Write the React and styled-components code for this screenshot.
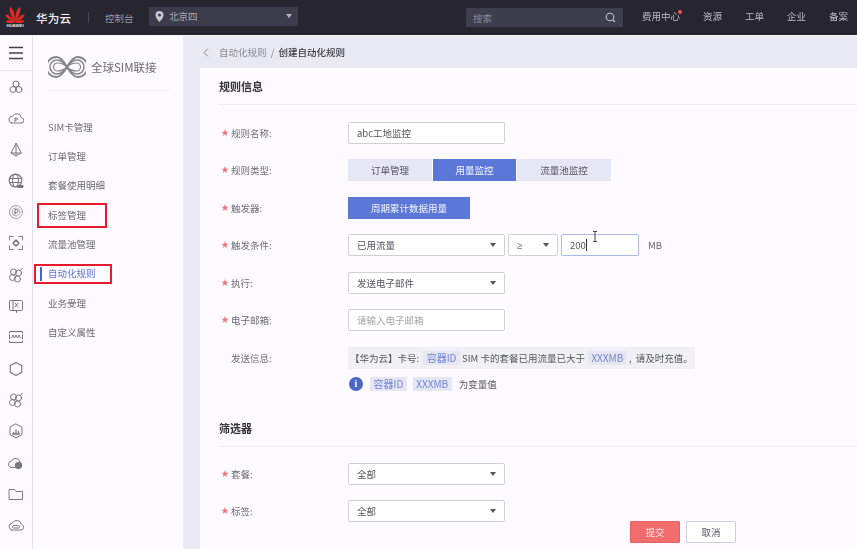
import React from 'react';
import styled, { createGlobalStyle } from 'styled-components';

const Global = createGlobalStyle`
  html, body { margin: 0; padding: 0; height: 100%; overflow: hidden; }
  body { font-family: "Noto Sans CJK SC", "Liberation Sans", sans-serif; font-size: 9.5px; color: #555; background: #e9e9f2; }
  #root { height: 100%; }
  * { box-sizing: border-box; }
`;

const Page = styled.div`width: 857px; height: 549px; overflow: hidden; display: flex; flex-direction: column; filter: blur(0.3px);`;

const Header = styled.header`
  height: 36px; flex: none; background: #272530; border-bottom: 1px solid #f4f4f8;
  display: flex; align-items: center; color: #c9c9d0;
`;
const LogoBox = styled.div`width: 36px; padding-left: 4px; flex: none; display: flex; align-items: center;`;
const Brand = styled.div`font-size: 11.5px; font-weight: 500; color: #f0f0f2; width: 52px; letter-spacing: .2px;`;
const HeaderRule = styled.div`width: 1px; height: 11px; background: #4a4955; margin-right: 16px;`;
const Console = styled.div`color: #9a99a3; width: 44px; font-size: 9.5px;`;
const Region = styled.div`
  width: 149px; height: 19px; background: #3c3c4c; border-radius: 1px; display: flex; align-items: center;
  padding: 0 6px; color: #a7a7b0; gap: 5px; margin-bottom: 2px; margin-top: -1px;
`;
const Caret = styled.span`
  width: 0; height: 0; border-left: 3px solid transparent; border-right: 3px solid transparent;
  border-top: 4px solid ${p => p.$c || '#555'}; margin-left: auto; flex: none;
`;
const Search = styled.div`
  margin-left: 168px; width: 157px; height: 19px; background: #3f3e4e; border-radius: 1px; display: flex;
  align-items: center; justify-content: space-between; padding: 0 7px; color: #8a8a94;
`;
const Nav = styled.nav`margin-left: 19px; display: flex; gap: 23px; color: #bdbdc4; margin-top: -3px;`;
const NavItem = styled.span`position: relative; white-space: nowrap;`;
const Dot = styled.i`position: absolute; right: -2px; top: 1px; width: 4px; height: 4px; border-radius: 50%; background: #f0525a;`;

const Body = styled.div`flex: 1; display: flex; min-height: 0;`;

const Rail = styled.aside`width: 33px; flex: none; background: #fdfbff; border-right: 1px solid #e2e2ea; display: flex; flex-direction: column; align-items: center;`;
const Burger = styled.div`
  width: 100%; height: 35px; flex: none; border-bottom: 1px solid #e8e8ee; display: flex; align-items: center; justify-content: center;
`;
const RailList = styled.div`display: flex; flex-direction: column; align-items: center; gap: 15.3px; padding-top: 8px;`;

const Side = styled.aside`width: 150px; flex: none; background: #fdfbff; padding: 0 15px;`;
const SideBrand = styled.div`
  height: 55px; margin-top: 0; display: flex; align-items: center; gap: 5px; border-bottom: 1px solid #ebebf1; color: #6b6b73; font-size: 11.5px; margin-right: -1px;
  padding-top: 8px;
`;
const Menu = styled.div`display: flex; flex-direction: column; padding-top: 21.5px; margin-left: 0;`;
const MenuItem = styled.div`
  position: relative; height: 29.35px; line-height: 29px; color: ${p => p.$active ? '#5d76d3' : '#6a6a72'}; white-space: nowrap;
`;
const ActiveBar = styled.i`position: absolute; left: -8px; top: 8px; width: 1.5px; height: 14px; background: #4a63c9;`;
const RedBox = styled.i`
  position: absolute; left: ${p => p.$l}px; width: ${p => p.$w}px; top: ${p => p.$t}px; height: ${p => p.$h}px;
  border: 2px solid #e8192c; pointer-events: none;
`;

const Main = styled.main`flex: 1; min-width: 0; padding-left: 17px;`;
const Crumb = styled.div`height: 32px; display: flex; align-items: center; color: #8b8b94; margin-left: 0; padding-left: 3px;`;
const CrumbBack = styled.span`width: 16px; display: flex;`;
const CrumbNow = styled.b`color: #3a3a42; font-weight: 500; margin-left: 4px;`;
const Card = styled.section`background: #fdfbff; padding-left: 18px; height: 481px; overflow: hidden; display: flex; flex-direction: column;`;
const SectionTitle = styled.h2`
  margin: 0; height: 37px; line-height: 37px; font-size: 11px; font-weight: 700; color: #33333a; border-bottom: 1px solid #ededf3; padding-left: 1px; flex: none;
`;
const Rows = styled.div`padding-top: 9px; display: flex; flex-direction: column;`;
const Row = styled.div`height: 37.5px; flex: none; display: flex; align-items: center;`;
const Label = styled.div`width: 130px; flex: none; color: #6d6d75; padding-left: 13px; position: relative;`;
const Star = styled.span`position: absolute; left: 3px; top: 0; color: #e8767c; font-size: 8px;`;
const Control = styled.div`display: flex; align-items: center; gap: ${p => p.$gap || 0}px;`;
const Box = styled.div`
  width: ${p => p.$w || 157}px; height: 22px; background: #fff; border: 1px solid ${p => p.$focus ? '#a9b9ec' : '#d0d0d8'}; border-radius: 2px;
  display: flex; align-items: center; padding: 0 8px; color: ${p => p.$muted ? '#a5a5ad' : '#55555d'}; position: relative; white-space: nowrap;
`;
const Geq = styled.span`font-family: "Liberation Sans", sans-serif; font-size: 10px; color: #77777f;`;
const TextCaret = styled.i`width: 1px; height: 12px; background: #333; margin-left: 0;`;
const Ibeam = styled.svg`position: absolute; left: 30px; top: -4px;`;
const Unit = styled.span`margin-left: 6px; color: #666;`;
const Seg = styled.div`
  width: ${p => p.$w}px; height: 22px; display: flex; align-items: center; justify-content: center;
  background: ${p => p.$on ? '#5b78d8' : '#e6e7f6'}; color: ${p => p.$on ? '#f4f5fd' : '#55555d'};
`;
const Message = styled.div`
  width: 347px; height: 22px; background: #f0f0f5; display: flex; align-items: center; padding-left: 2px; white-space: pre; color: #55555d; border-radius: 1px;
`;
const Tag = styled.span`
  display: inline-flex; align-items: center; height: 14px; padding: 0 3.5px; background: #e5e6f1; color: #7387d6; margin: ${p => p.$m || '0'}; border-radius: 1px; font-size: 10px;
`;
const VarRow = styled.div`margin-left: 130px; height: 22px; display: flex; align-items: center; margin-top: -4px; color: #55555d; flex: none;`;
const InfoDot = styled.span`
  width: 14px; height: 14px; border-radius: 50%; background: #4b66c6; color: #fff; display: flex; align-items: center; justify-content: center;
  font-size: 10px; font-weight: 700; margin: 0 7px 0 1px; font-family: "Liberation Serif", serif;
`;
const FilterTitle = styled(SectionTitle)`margin-top: 15px;`;
const FilterRows = styled.div`padding-top: 8.5px; display: flex; flex-direction: column;`;
const Actions = styled.div`display: flex; gap: 6px; padding-left: 412px; margin-top: -9px;`;
const Btn = styled.div`
  width: ${p => p.$w}px; height: 22px; display: flex; align-items: center; justify-content: center; border-radius: 1px;
  background: ${p => p.$primary ? '#f26b6d' : '#fff'}; color: ${p => p.$primary ? '#fbe9ea' : '#55555d'}; border: 1px solid ${p => p.$primary ? '#e85f62' : '#d0d0d8'};
`;

const Ic = ({ children }) => (
  <svg width="16" height="16" viewBox="0 0 16 16" fill="none" stroke="#77777f" strokeWidth="1" strokeLinejoin="round" strokeLinecap="round">{children}</svg>
);

const railIcons = [
  <><circle cx="8" cy="5" r="3" /><circle cx="5" cy="10.5" r="3" /><circle cx="11" cy="10.5" r="3" /></>,
  <><path d="M3.5 13h9.5a2.6 2.6 0 0 0 .5-5.200A4.800 4.800 0 0 0 4.500 6.300 3.400 3.400 0 0 0 3.500 13z" /><path d="M7 11.500V8h1.500a1 1 0 0 1 0 2H7" /></>,
  <><path d="M8 1.500L3 11l5 3 5-3z" /><path d="M8 1.500V14M3 11h10" /></>,
  <><circle cx="7.500" cy="7.500" r="6.300" strokeWidth="1.200" /><ellipse cx="7.500" cy="7.500" rx="3" ry="6.300" /><path d="M1.500 5.500h12M1.500 9.500h12" /><path d="M10 12.500h5v2h-5z" fill="#77777f" /></>,
  <><circle cx="8" cy="8" r="6.500" stroke="#9a9aa3" /><circle cx="8" cy="8" r="4" stroke="#b0b0b8" /><path d="M7 10.500v-5h1.500a1.400 1.400 0 0 1 0 3H7" /></>,
  <><path d="M1.500 5V1.500H5M11 1.500h3.500V5M14.500 11v3.500H11M5 14.500H1.500V11" /><path d="M8 5l3 3-3 3-3-3z" strokeWidth="1.500" /></>,
  <><circle cx="5.500" cy="5" r="3" /><circle cx="10.500" cy="6" r="3" /><circle cx="4.500" cy="10.500" r="3" /><circle cx="9.500" cy="12" r="3" /><path d="M12.500 3l2-1.500" /></>,
  <><rect x="1.500" y="2.500" width="13" height="10" rx="1" /><path d="M5 2.500v10M7 5l3 4M10 5L7 9M8.500 12.500v2" /></>,
  <><path d="M1.500 4V2.500h13V4M1.500 12v1.500h13V12M1.500 6v4M14.500 6v4" /><path d="M3.500 9l1.500-3 1.500 3 1.500-3 1.500 3 1.500-3 1.500 3" /></>,
  <path d="M8 1.500l5.800 3.200v6.600L8 14.500l-5.800-3.200V4.700z" strokeWidth="1.200" />,
  <><circle cx="5.500" cy="5" r="3" /><circle cx="10.500" cy="6" r="3" /><circle cx="4.500" cy="10.500" r="3" /><circle cx="9.500" cy="12" r="3" /><path d="M12.500 3l2-1.500" /></>,
  <><path d="M8 1l6 3.400v7.200L8 15l-6-3.400V4.400z" /><path d="M4.500 11h7M5.500 11V9.500M8 11V7M10.500 11V8.500" strokeWidth="1.300" /></>,
  <><path d="M2.500 12.500h8a3 3 0 0 0 1.500-5.500A4.500 4.500 0 0 0 3.500 6 3.400 3.400 0 0 0 2.500 12.500z" /><circle cx="10.500" cy="10.500" r="3.200" fill="#77777f" /></>,
  <path d="M1.500 3.500h5l1.500 2h6.500v8h-13z" />,
  <><path d="M3.500 13h9.500a2.800 2.800 0 0 0 .5-5.500A4.800 4.800 0 0 0 4.500 6 3.600 3.600 0 0 0 3.500 13z" /><rect x="4.500" y="8.500" width="7" height="2.500" rx="1" /></>,
];

const petals = [
  { a: -82, l: 9.5, w: 2 }, { a: -50, l: 12.5, w: 2.4 }, { a: -17, l: 16.5, w: 2.8 },
  { a: 17, l: 16.5, w: 2.8 }, { a: 50, l: 12.5, w: 2.4 }, { a: 82, l: 9.5, w: 2 },
];

const HuaweiLogo = () => (
  <svg width="22" height="26" viewBox="0 0 22 26">
    <g fill="#de2a20">
      {petals.map(({ a, l, w }) => (
        <path key={a} transform={`rotate(${a} 11 17.5)`} d={`M11 17.5C${11 - w} ${17.5 - l * 0.6} ${11 - w * 0.7} ${17.5 - l * 0.85} 11 ${17.5 - l}C${11 + w * 0.7} ${17.5 - l * 0.85} ${11 + w} ${17.5 - l * 0.6} 11 17.5z`} />
      ))}
    </g>
    <text x="11" y="22" textAnchor="middle" fontSize="4.300" fontWeight="700" fill="#e8e8ea" fontFamily="Liberation Sans, sans-serif">HUAWEI</text>
  </svg>
);

const SimLogo = () => (
  <svg width="38" height="24" viewBox="0 0 38 24" fill="none" stroke="#85858d">
    <path d="M19 12C15 5 12 2 8.500 2a10 10 0 0 0 0 20c3.500 0 6.500-3 10.500-10s7-10 10.500-10a10 10 0 0 1 0 20c-3.500 0-6.500-3-10.500-10z" strokeWidth="1.800" />
    <path d="M19 12C15.500 7 12.500 5 9 5a7 7 0 0 0 0 14c3.500 0 6.500-2 10-7s6.500-7 10-7a7 7 0 0 1 0 14c-3.500 0-6.500-2-10-7z" strokeWidth="1.500" />
    <path d="M19 12C16 9 13 8 9.500 8a4 4 0 0 0 0 8c3.500 0 6.500-1 9.500-4s6-4 9.500-4a4 4 0 0 1 0 8c-3.500 0-6.500-1-9.500-4z" strokeWidth="1.200" />
  </svg>
);

const menu = ['SIM卡管理', '订单管理', '套餐使用明细', '标签管理', '流量池管理', '自动化规则', '业务受理', '自定义属性'];

const Field = ({ label, star = true, children, gap }) => (
  <Row>
    <Label>{star && <Star>★</Star>}{label}</Label>
    <Control $gap={gap}>{children}</Control>
  </Row>
);

export default function App() {
  return (
    <Page>
      <Global />
      <Header>
        <LogoBox><HuaweiLogo /></LogoBox>
        <Brand>华为云</Brand>
        <HeaderRule />
        <Console>控制台</Console>
        <Region>
          <svg width="9" height="11" viewBox="0 0 9 11"><path d="M4.500 0a4 4 0 0 0-4 4c0 3 4 7 4 7s4-4 4-7a4 4 0 0 0-4-4zm0 5.500a1.500 1.500 0 1 1 0-3 1.500 1.500 0 0 1 0 3z" fill="#c8c8d0" /></svg>
          <span>北京四</span>
          <Caret $c="#b5b5bd" />
        </Region>
        <Search>
          <span>搜索</span>
          <svg width="11" height="11" viewBox="0 0 11 11" fill="none" stroke="#c5c5cc" strokeWidth="1.100"><circle cx="5" cy="5" r="3.800" /><path d="M8 8l2 2" /></svg>
        </Search>
        <Nav>
          <NavItem>费用中心<Dot /></NavItem>
          <NavItem>资源</NavItem>
          <NavItem>工单</NavItem>
          <NavItem>企业</NavItem>
          <NavItem>备案</NavItem>
        </Nav>
      </Header>
      <Body>
        <Rail>
          <Burger>
            <svg width="16" height="14" viewBox="0 0 16 14" stroke="#44444c" strokeWidth="1.400"><path d="M1 1.500h14M1 7h14M1 12.500h14" /></svg>
          </Burger>
          <RailList>
            {railIcons.map((ic, i) => <Ic key={i}>{ic}</Ic>)}
          </RailList>
        </Rail>
        <Side>
          <SideBrand><SimLogo />全球SIM联接</SideBrand>
          <Menu>
            {menu.map((m, i) => (
              <MenuItem key={m} $active={i === 5}>
                {m}
                {i === 3 && <RedBox $l={-11} $w={70} $t={2} $h={25} />}
                {i === 5 && <><ActiveBar /><RedBox $l={-14} $w={78} $t={5} $h={20} /></>}
              </MenuItem>
            ))}
          </Menu>
        </Side>
        <Main>
          <Crumb>
            <CrumbBack>
              <svg width="6" height="9" viewBox="0 0 6 9" fill="none" stroke="#85858d"><path d="M5 .5l-4 4 4 4" /></svg>
            </CrumbBack>
            自动化规则 &nbsp;/<CrumbNow>创建自动化规则</CrumbNow>
          </Crumb>
          <Card>
            <SectionTitle>规则信息</SectionTitle>
            <Rows>
              <Field label="规则名称:"><Box>abc工地监控</Box></Field>
              <Field label="规则类型:" gap={1}>
                <Seg $w={84}>订单管理</Seg>
                <Seg $w={83} $on>用量监控</Seg>
                <Seg $w={94}>流量池监控</Seg>
              </Field>
              <Field label="触发器:"><Seg $w={122} $on>周期累计数据用量</Seg></Field>
              <Field label="触发条件:" gap={3}>
                <Box>已用流量<Caret /></Box>
                <Box $w={50}><Geq>≥</Geq><Caret /></Box>
                <Box $w={78} $focus>200<TextCaret />
                  <Ibeam width="6" height="11" viewBox="0 0 6 11" fill="none" stroke="#444"><path d="M1 .5h4M3 .5v10M1 10.500h4" /></Ibeam>
                </Box>
                <Unit>MB</Unit>
              </Field>
              <Field label="执行:"><Box>发送电子邮件<Caret /></Box></Field>
              <Field label="电子邮箱:"><Box $muted>请输入电子邮箱</Box></Field>
              <Field label="发送信息:" star={false}>
                <Message>【华为云】卡号:<Tag $m="0 0 0 4px">容器ID</Tag> SIM 卡的套餐已用流量已大于<Tag $m="0 0 0 3px">XXXMB</Tag> ,  请及时充值。</Message>
              </Field>
              <VarRow>
                <InfoDot>i</InfoDot>
                <Tag $m="0 6px 0 0">容器ID</Tag>
                <Tag $m="0 7px 0 0">XXXMB</Tag>
                为变量值
              </VarRow>
            </Rows>
            <FilterTitle>筛选器</FilterTitle>
            <FilterRows>
              <Field label="套餐:"><Box>全部<Caret /></Box></Field>
              <Field label="标签:"><Box>全部<Caret /></Box></Field>
            </FilterRows>
            <Actions>
              <Btn $w={50} $primary>提交</Btn>
              <Btn $w={50}>取消</Btn>
            </Actions>
          </Card>
        </Main>
      </Body>
    </Page>
  );
}
